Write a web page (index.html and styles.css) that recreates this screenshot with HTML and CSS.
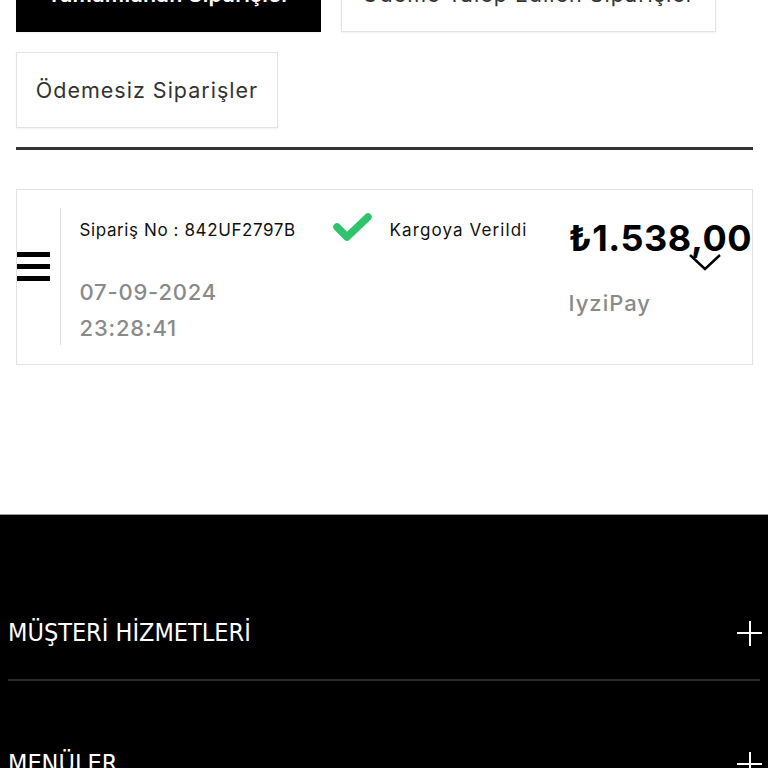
FILE: index.html
```html
<!DOCTYPE html>
<html lang="tr">
<head>
<meta charset="utf-8">
<link rel="stylesheet" href="styles.css">
</head>
<body>
<main class="page">
  <div class="tabs">
    <button class="tab tab-active">Tamamlanan Siparişler</button>
    <button class="tab tab-wide">Ödeme Talep Edilen Siparişler</button>
    <button class="tab tab-small">Ödemesiz Siparişler</button>
  </div>
  <hr class="rule">
  <section class="order">
    <div class="handle">
      <span></span><span></span><span></span>
    </div>
    <div class="order-body">
      <div class="col-info">
        <div class="order-no">Sipariş No : 842UF2797B</div>
        <div class="order-date">07-09-2024<br>23:28:41</div>
      </div>
      <div class="col-status">
        <svg class="check" width="40" height="30" viewBox="0 0 40 30"><polyline points="4,15 14,25 35,5" fill="none" stroke="#2fc46c" stroke-width="7.5" stroke-linecap="round" stroke-linejoin="round"/></svg>
        <span class="status">Kargoya Verildi</span>
      </div>
      <div class="col-price">
        <div class="price">₺1.538,00</div>
        <svg class="chevron" width="34" height="20" viewBox="0 0 34 20"><polyline points="2,3 17,17 32,3" fill="none" stroke="#000" stroke-width="2.4"/></svg>
        <div class="pay">IyziPay</div>
      </div>
    </div>
  </section>
</main>
<footer class="footer">
  <div class="acc">
    <span class="acc-title">MÜŞTERİ HİZMETLERİ</span>
    <span class="plus"></span>
  </div>
  <div class="acc">
    <span class="acc-title">MENÜLER</span>
    <span class="plus"></span>
  </div>
</footer>
</body>
</html>
```
FILE: styles.css
```css
* { box-sizing: border-box; }
html, body { margin: 0; padding: 0; background: #fff; }
body {
  font-family: Inter, "Noto Sans", "Open Sans", sans-serif;
  color: #111;
  overflow: hidden;
}
.page {
  padding: 0 15px 0 16px;
  margin-top: -44px;
  padding-bottom: 149px;
}
.tabs {
  display: flex;
  flex-wrap: wrap;
  gap: 20px 20px;
}
.tab {
  height: 76px;
  padding: 0 18px;
  font-family: inherit;
  font-size: 21.5px;
  letter-spacing: 1px;
  color: #333;
  background: #fff;
  border: 1px solid #e3e3e3;
  box-shadow: 0 1px 2px rgba(0,0,0,0.06);
  white-space: nowrap;
}
.tab-active {
  width: 305px;
  background: #000;
  color: #fff;
  font-weight: 600;
  border-color: #000;
  letter-spacing: 0.3px;
}
.tab-wide { width: 375px; }
.tab-small { width: 262px; }
.rule {
  margin: 19px 0 0;
  border: 0;
  height: 3px;
  background: #333;
}
.order {
  margin-top: 39px;
  height: 176px;
  border: 1px solid #e2e2e2;
  display: flex;
  align-items: center;
}
.handle {
  width: 33px;
  display: flex;
  flex-direction: column;
  gap: 7px;
  margin-bottom: 22px;
}
.handle span {
  display: block;
  height: 5px;
  background: #000;
}
.order-body {
  align-self: stretch;
  margin: 18px 0 19px 10px;
  border-left: 1px solid #dedede;
  padding-left: 19px;
  display: flex;
}
.col-info { width: 253px; padding-top: 8px; }
.order-no { font-size: 17px; line-height: 28px; color: #111; letter-spacing: 0.6px; }
.order-date {
  margin-top: 30px;
  font-size: 22px;
  line-height: 36px;
  color: #8a8a8a;
  font-weight: 500;
  letter-spacing: 0.8px;
}
.col-status {
  width: 236px;
  display: flex;
  align-items: flex-start;
  padding-top: 4px;
}
.status { margin-left: 17px; font-size: 17px; line-height: 28px; padding-top: 4px; color: #111; letter-spacing: 1.1px; }
.col-price { position: relative; padding-top: 8px; }
.price {
  font-size: 36px;
  font-weight: 700;
  line-height: 44px;
  color: #000;
  white-space: nowrap;
  letter-spacing: 0.5px;
}
.chevron { position: absolute; left: 119px; top: 44px; }
.pay {
  margin-top: 28px;
  font-size: 22px;
  line-height: 30px;
  color: #8a8a8a;
  font-weight: 500;
  letter-spacing: 1px;
}
.footer {
  background: #000;
  border-top: 1px solid #9a9a9a;
  padding: 37px 6px 0 8px;
  height: 400px;
}
.acc {
  position: relative;
  display: flex;
  align-items: center;
  justify-content: space-between;
  padding: 69px 0 32px;
  border-bottom: 2px solid #2a2a2a;
  margin-right: 2px;
}
.acc:first-child { padding-top: 67px; }
.acc-title {
  font-family: "Liberation Sans Narrow", "DejaVu Sans Condensed", "DejaVu Sans", sans-serif;
  font-stretch: condensed;
  font-size: 25px;
  line-height: 28px;
  color: #fff;
}
.plus {
  position: relative;
  width: 25px;
  height: 25px;
  margin-right: -2px;
}
.plus::before, .plus::after {
  content: "";
  position: absolute;
  background: #fff;
}
.plus::before { left: 0; right: 0; top: 11.5px; height: 2px; }
.plus::after { top: 0; bottom: 0; left: 11.5px; width: 2px; }
```
